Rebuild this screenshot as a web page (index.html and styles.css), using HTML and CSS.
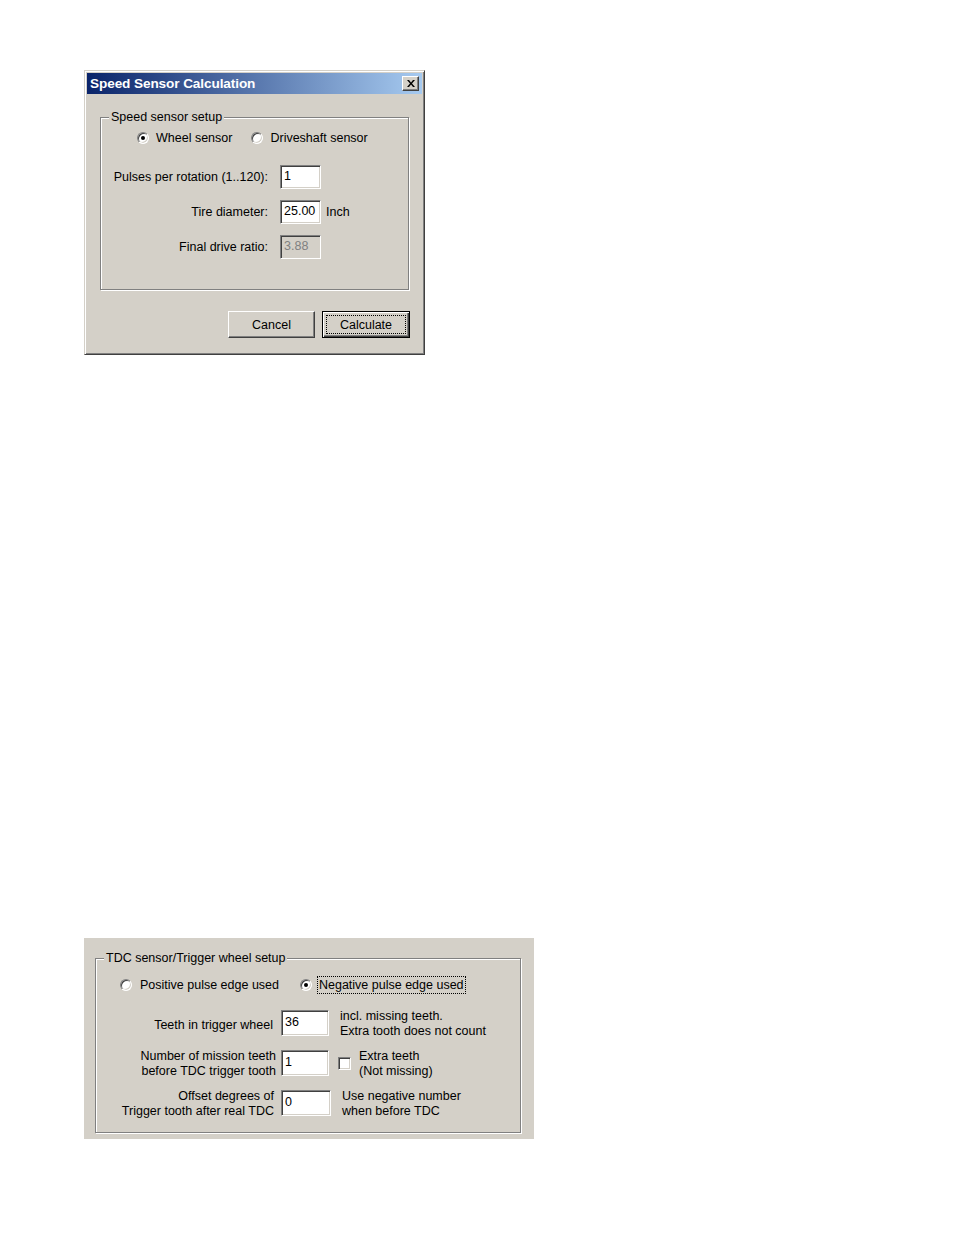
FILE: index.html
```html
<!DOCTYPE html>
<html>
<head>
<meta charset="utf-8">
<link rel="stylesheet" href="styles.css">
</head>
<body>
<div class="page">
  <div class="dlg">
    <div class="titlebar">
      <span class="title">Speed Sensor Calculation</span>
      <span class="close"><svg width="8" height="7" viewBox="0 0 8 7"><path d="M0 0h2l2 2.5L6 0h2L5 3.5 8 7H6L4 4.5 2 7H0l3-3.5z" fill="#000"/></svg></span>
    </div>
    <div class="group g1">
      <span class="legend">Speed sensor setup</span>
      <div class="radios r1">
        <label class="ritem"><span class="radio on"></span><span>Wheel sensor</span></label>
        <label class="ritem"><span class="radio"></span><span>Driveshaft sensor</span></label>
      </div>
      <div class="form1">
        <span class="lbl">Pulses per rotation (1..120):</span><span class="inp">1</span><span></span>
        <span class="lbl">Tire diameter:</span><span class="inp">25.00</span><span class="unit">Inch</span>
        <span class="lbl">Final drive ratio:</span><span class="inp dis">3.88</span><span></span>
      </div>
    </div>
    <div class="buttons">
      <span class="btn">Cancel</span>
      <span class="btn def"><span class="focus">Calculate</span></span>
    </div>
  </div>

  <div class="panel2">
    <div class="group g2">
      <span class="legend">TDC sensor/Trigger wheel setup</span>
      <div class="radios r2">
        <label class="ritem"><span class="radio"></span><span>Positive pulse edge used</span></label>
        <label class="ritem"><span class="radio on"></span><span class="focus-txt">Negative pulse edge used</span></label>
      </div>
      <div class="rows">
        <div class="row">
          <span class="lbl2 pr3 low">Teeth in trigger wheel</span>
          <span class="inp in2">36</span>
          <span class="note">incl. missing teeth.<br>Extra tooth does not count</span>
        </div>
        <div class="row">
          <span class="lbl2 low1">Number of mission teeth<br>before TDC trigger tooth</span>
          <span class="inp in2">1</span>
          <span class="chk"></span>
          <span class="note n2">Extra teeth<br>(Not missing)</span>
        </div>
        <div class="row">
          <span class="lbl2 pr2 low1">Offset degrees of<br>Trigger tooth after real TDC</span>
          <span class="inp in3">0</span>
          <span class="note">Use negative number<br>when before TDC</span>
        </div>
      </div>
    </div>
  </div>
</div>
</body>
</html>
```
FILE: styles.css
```css
* { box-sizing: border-box; }
html, body { margin: 0; padding: 0; background: #fff; }
body { font-family: "Liberation Sans", Arial, sans-serif; font-size: 12.5px; color: #000; }
.page { padding: 70px 0 0 84px; }

.dlg {
  width: 341px; height: 285px;
  background: #d4d0c8;
  border: 1px solid; border-color: #d4d0c8 #404040 #404040 #d4d0c8;
  box-shadow: inset 1px 1px #fff, inset -1px -1px #808080;
  padding: 2px;
  display: flex; flex-direction: column;
}
.titlebar {
  height: 21px;
  background: linear-gradient(to right, #0a246a, #a6caf0);
  display: flex; align-items: center; justify-content: space-between;
  padding: 0 3px 0 3px;
}
.title { color: #fff; font-weight: bold; font-size: 13.6px; letter-spacing: -0.1px; }
.close {
  width: 17px; height: 15px;
  background: #d4d0c8;
  border: 1px solid; border-color: #fff #404040 #404040 #fff;
  box-shadow: inset -1px -1px #808080;
  display: flex; align-items: center; justify-content: center;
  padding-bottom: 1px;
}

.group {
  position: relative;
  border: 1px solid #808080;
  box-shadow: inset 1px 1px #fff, 1px 1px #fff;
}
.legend {
  position: absolute; top: -8px; left: 8px;
  background: #d4d0c8; padding: 0 2px; line-height: 14px;
}
.g1 { width: 309px; height: 173px; margin: 23px 0 0 13px; padding: 13px 0 0 0; }
.radios { display: flex; align-items: center; height: 14px; }
.r1 { padding-left: 36px; gap: 19px; }
.ritem { display: flex; align-items: center; gap: 7px; line-height: 14px; }
.radio {
  position: relative;
  width: 12px; height: 12px; border-radius: 50%;
  background: #fff;
  border: 1px solid; border-color: #808080 #fff #fff #808080;
  box-shadow: inset 1px 1px #404040, inset -1px -1px #d4d0c8;
  flex: none;
}
.radio.on::after {
  content: ""; position: absolute; left: 3px; top: 3px;
  width: 4px; height: 4px; border-radius: 50%; background: #000;
}
.form1 {
  display: grid;
  grid-template-columns: 167px 41px auto;
  column-gap: 12px; row-gap: 11px;
  margin-top: 20px;
  align-items: center;
}
.form1 .unit { margin-left: -7px; }
.lbl { text-align: right; }
.inp {
  height: 24px;
  background: #fff;
  border: 1px solid; border-color: #808080 #fff #fff #808080;
  box-shadow: inset 1px 1px #404040, inset -1px -1px #d4d0c8;
  padding: 2px 3px; line-height: 16px;
}
.inp.dis { background: #d4d0c8; color: #808080; }

.buttons { display: flex; justify-content: flex-end; gap: 7px; margin: 21px 12px 0 0; }
.btn {
  width: 87px; height: 27px;
  background: #d4d0c8;
  border: 1px solid; border-color: #fff #404040 #404040 #fff;
  box-shadow: inset -1px -1px #808080;
  display: flex; align-items: center; justify-content: center;
}
.btn.def {
  width: 88px;
  border: 1px solid #000;
  box-shadow: inset 1px 1px #fff, inset -1px -1px #404040, inset -2px -2px #808080;
  padding: 3px;
}
.focus {
  flex: 1; align-self: stretch;
  border: 1px dotted #000;
  display: flex; align-items: center; justify-content: center;
}

.panel2 {
  width: 450px; height: 201px;
  background: #d4d0c8;
  margin-top: 583px;
  padding: 20px 0 0 11px;
}
.g2 { width: 426px; height: 175px; padding: 19px 0 0 24px; }
.r2 { gap: 21px; }
.r2 .ritem { gap: 8px; }
.focus-txt { outline: 1px dotted #000; outline-offset: 1px; margin-left: -1px; }
.rows { display: flex; flex-direction: column; gap: 14px; margin: 18px 0 0 -24px; }
.row { display: flex; align-items: center; height: 26px; }
.lbl2 { width: 180px; text-align: right; line-height: 15px; }
.low { padding-top: 4px; }
.low1 { padding-top: 1px; }
.pr3 { padding-right: 3px; }
.pr2 { padding-right: 2px; }
.inp.in2, .inp.in3 { height: 26px; width: 48px; margin-left: 5px; padding-top: 3px; }
.inp.in3 { width: 50px; }
.note { margin-left: 11px; line-height: 15px; padding-top: 1px; }
.chk {
  width: 13px; height: 13px; margin-left: 9px;
  background: #fff;
  border: 1px solid; border-color: #808080 #fff #fff #808080;
  box-shadow: inset 1px 1px #404040, inset -1px -1px #d4d0c8;
}
.note.n2 { margin-left: 8px; }
```
